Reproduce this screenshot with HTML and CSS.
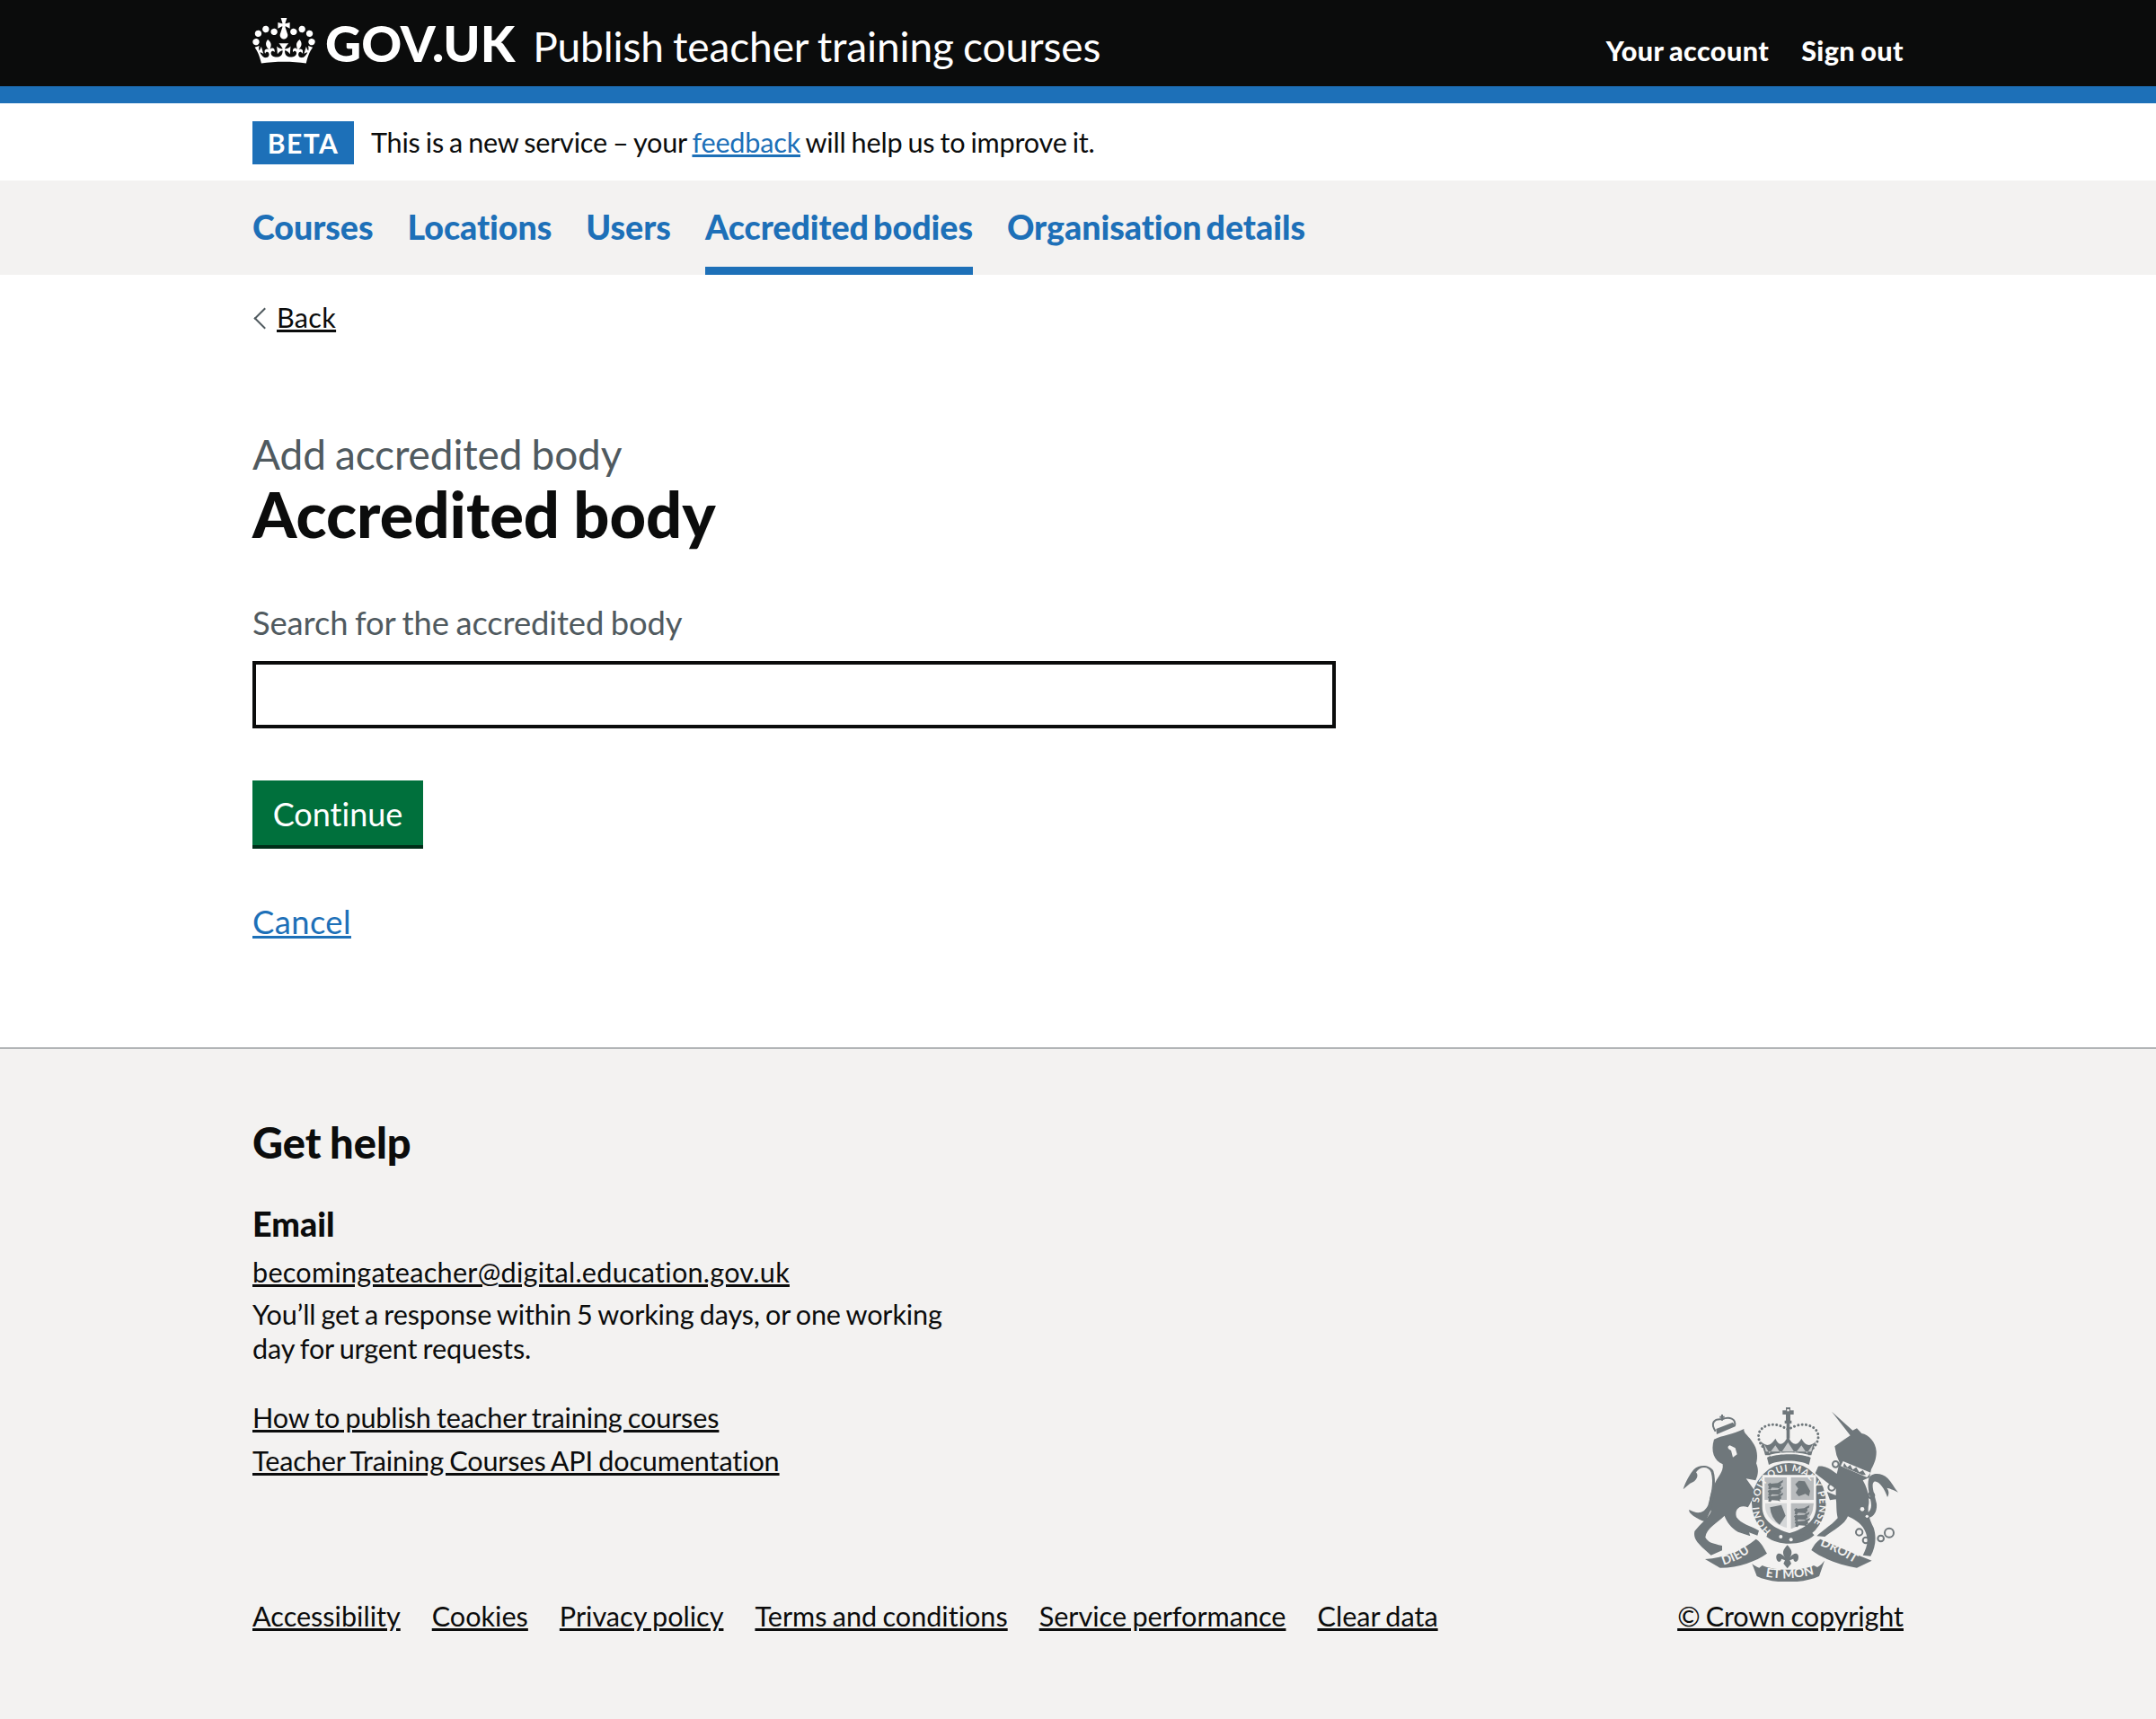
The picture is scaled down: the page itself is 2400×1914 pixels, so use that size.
FILE: index.html
```html
<!DOCTYPE html>
<html lang="en">
<head>
<meta charset="utf-8">
<title>Accredited body - Publish teacher training courses</title>
<link rel="stylesheet" href="styles.css">
</head>
<body>
<header class="header">
  <div class="container header-inner">
    <div class="brand">
      <svg class="crown" viewBox="0 0 132 97" aria-hidden="true"><path fill="currentColor" fill-rule="evenodd" d="M25 30.2c3.5 1.5 7.7-.2 9.1-3.7 1.5-3.6-.2-7.8-3.9-9.2-3.6-1.4-7.6.3-9.1 3.9-1.4 3.5.3 7.5 3.9 9zM9 39.5c3.6 1.5 7.8-.2 9.2-3.7 1.5-3.6-.2-7.8-3.9-9-3.6-1.5-7.6.2-9.1 3.8-1.4 3.5.3 7.5 3.8 8.9zM4.4 57.2c3.5 1.5 7.7-.2 9.1-3.8 1.5-3.6-.2-7.7-3.9-9.1-3.5-1.5-7.6.3-9.1 3.9-1.4 3.5.3 7.6 3.9 9zm38.3-21.4c3.5 1.5 7.7-.2 9.1-3.8 1.5-3.6-.2-7.7-3.9-9.1-3.6-1.5-7.6.3-9.1 3.9-1.3 3.6.4 7.7 3.9 9zm64.4-5.6c-3.6 1.5-7.8-.2-9.1-3.7-1.5-3.6.2-7.8 3.8-9.2 3.6-1.4 7.7.3 9.2 3.9 1.3 3.5-.4 7.5-3.9 9zm15.9 9.3c-3.6 1.5-7.7-.2-9.1-3.7-1.5-3.6.2-7.8 3.7-9.2 3.6-1.4 7.7.3 9.2 3.9 1.5 3.5-.3 7.5-3.8 9zm4.7 17.7c-3.6 1.5-7.8-.2-9.2-3.8-1.5-3.6.2-7.7 3.9-9.1 3.6-1.5 7.7.3 9.2 3.9 1.3 3.5-.4 7.6-3.9 9zM89.3 35.8c-3.6 1.5-7.8-.2-9.2-3.8-1.4-3.6.2-7.7 3.9-9.1 3.6-1.5 7.7.3 9.2 3.9 1.4 3.6-.3 7.7-3.9 9zM69.7 17.7l8.9 4.7V9.3l-8.9 2.8c-.2-.3-.5-.6-.9-.9L72.4 0H59.6l3.5 11.2c-.3.3-.6.5-.9.9l-8.8-2.8v13.1l8.8-4.7c.3.3.6.7.9.9l-5 15.4v.1c-.2.8-.4 1.6-.4 2.4 0 4.1 3.1 7.5 7 8.1h.2c.3 0 .7.1 1 .1.4 0 .7 0 1-.1h.2c4-.6 7.1-4.1 7.1-8.1 0-.8-.1-1.7-.4-2.4V34l-5.1-15.4c.4-.2.7-.6 1-.9zM66 92.8c16.9 0 32.8 1.1 47.1 3.2 4-16.9 8.9-26.7 14-33.5l-9.6-3.4c1 4.9 1.1 7.2 0 10.2-1.5-1.4-3-4.3-4.2-8.7L108.6 76c2.8-2 5-3.2 7.5-3.3-4.4 9.4-10 11.9-13.6 11.2-4.3-.8-6.3-4.6-5.6-7.9 1-4.7 5.7-5.9 8-.5 4.3-8.7-3-11.4-7.6-8.8 7.1-7.2 7.9-13.5 2.1-21.1-8 6.1-8.1 12.3-4.5 20.8-4.7-5.4-12.1-2.5-9.5 6.2 3.4-5.2 7.9-2 7.2 3.1-.6 4.3-6.4 7.8-13.5 7.2-10.3-.9-10.9-8-11.2-13.8 2.5-.5 7.1 1.8 11 7.3L80.2 60c-4.1 4.4-8 5.3-12.3 5.4 1.4-4.4 8-11.6 8-11.6H55.5s6.4 7.2 7.9 11.6c-4.2-.1-8-1-12.3-5.4l1.4 16.4c3.9-5.5 8.5-7.7 10.9-7.3-.3 5.8-.9 12.8-11.1 13.8-7.2.6-12.9-2.9-13.5-7.2-.7-5 3.8-8.3 7.1-3.1 2.7-8.7-4.6-11.6-9.4-6.2 3.7-8.5 3.6-14.7-4.6-20.8-5.8 7.6-5 13.9 2.2 21.1-4.7-2.6-11.9.1-7.7 8.8 2.3-5.5 7.1-4.2 8.1.5.7 3.3-1.3 7.1-5.7 7.9-3.5.7-9-1.8-13.5-11.2 2.5.1 4.7 1.3 7.5 3.3l-4.7-15.4c-1.2 4.4-2.7 7.2-4.3 8.7-1.1-3-.9-5.3 0-10.2l-9.5 3.4c5 6.9 9.9 16.7 14 33.5 14.8-2.1 30.8-3.2 47.7-3.2z"/></svg>
      <span class="logotype">GOV.UK</span>
      <span class="service-name">Publish teacher training courses</span>
    </div>
    <nav class="account-nav">
      <a href="#">Your account</a>
      <a href="#">Sign out</a>
    </nav>
  </div>
</header>

<div class="container phase-banner">
  <strong class="tag">BETA</strong>
  <span>This is a new service – your <a class="link" href="#">feedback</a> will help us to improve it.</span>
</div>

<nav class="primary-nav">
  <ul class="container primary-list">
    <li><a href="#">Courses</a></li>
    <li><a href="#">Locations</a></li>
    <li><a href="#">Users</a></li>
    <li class="current"><a href="#">Accredited bodies</a></li>
    <li><a href="#">Organisation details</a></li>
  </ul>
</nav>

<div class="container">
  <a class="back" href="#">Back</a>
  <main class="main">
    <span class="caption">Add accredited body</span>
    <h1 class="title">Accredited body</h1>
    <label class="label" for="q">Search for the accredited body</label>
    <input class="input" id="q" type="text">
    <button class="button" type="button">Continue</button>
    <p class="cancel"><a class="link" href="#">Cancel</a></p>
  </main>
</div>

<footer class="footer">
  <div class="container">
    <h2 class="help-title">Get help</h2>
    <h3 class="help-sub">Email</h3>
    <p class="help-mail"><a href="#">becomingateacher@digital.education.gov.uk</a></p>
    <p class="help-note">You’ll get a response within 5 working days, or one working day for urgent requests.</p>
    <ul class="help-links">
      <li><a href="#">How to publish teacher training courses</a></li>
      <li><a href="#">Teacher Training Courses API documentation</a></li>
    </ul>
    <div class="footer-bottom">
      <ul class="meta-links">
        <li><a href="#">Accessibility</a></li>
        <li><a href="#">Cookies</a></li>
        <li><a href="#">Privacy policy</a></li>
        <li><a href="#">Terms and conditions</a></li>
        <li><a href="#">Service performance</a></li>
        <li><a href="#">Clear data</a></li>
      </ul>
      <div class="licence">
        <svg class="crest" viewBox="100 75 720 585" aria-hidden="true">
          <defs>
            <path id="garter" d="M396,490 A101,110 0 1 1 516,490"/>
            <path id="rib-l" d="M232,606 Q290,590 336,552"/>
            <path id="rib-r" d="M556,538 Q615,560 684,604"/>
            <path id="rib-c" d="M372,642 Q450,658 536,636"/>
            <path id="small-lion" d="M0,0 l8,-6 l4,3 l22,-2 l10,-6 l8,-4 l-2,8 l-6,3 l2,8 l-6,4 l2,6 l-8,-3 l-20,-1 l-4,6 l-8,-2 l2,-8 z"/>
          </defs>
          <g class="crest-dark">
            <!-- lion -->
            <path d="M205,185 C230,172 270,168 305,150 C302,165 324,175 334,195 C350,215 352,245 346,265 C354,285 354,300 344,322 L312,316 L345,362 L362,392 L335,385 C325,395 325,405 318,412 C292,402 272,418 280,445 C295,468 325,472 355,490 L350,506 L322,496 L326,508 L285,494 C262,480 248,462 240,440 C215,465 180,480 176,512 C186,530 200,532 232,540 L232,556 L195,572 L165,545 C150,530 135,515 140,492 C160,465 185,450 195,425 C185,400 190,370 205,340 C215,310 238,295 234,268 C205,255 193,225 205,185 Z"/>
            <path d="M176,460 C150,452 118,432 122,420 C150,436 172,432 185,405 C195,370 205,330 195,295 C188,275 160,272 145,295 C155,305 148,325 125,332 L102,352 C110,325 125,300 138,285 C155,268 190,268 203,290 C214,325 205,375 195,420 Z"/>
            <!-- unicorn -->
            <path d="M598,92 L668,155 L682,148 L698,165 C722,168 745,195 747,225 C748,250 738,270 730,285 L724,312 L702,322 C716,345 724,375 722,400 C718,420 718,440 738,480 C748,510 745,545 728,575 L702,572 C716,545 724,520 708,488 C694,462 672,452 652,442 C642,470 600,490 575,510 L548,508 C565,490 600,470 618,448 C612,420 615,398 612,385 L592,388 L582,360 L612,372 L612,350 C590,335 570,320 543,298 L553,275 C575,272 595,285 615,300 L624,262 L614,238 L608,208 L640,185 L660,172 Z"/>
            <path d="M722,315 C730,295 765,295 785,315 C800,330 805,345 820,362 C800,352 790,348 782,347 C790,357 790,368 784,378 C775,350 755,322 740,326 C727,335 742,370 748,400 C750,422 742,442 722,447 L716,432 C732,420 732,405 727,385 C722,360 716,337 722,315 Z"/>
            <!-- garter -->
            <ellipse cx="455" cy="396" rx="124" ry="132"/>
            <path d="M388,490 C420,515 490,515 526,490 L540,505 C500,542 420,542 380,510 Z"/>
            <!-- royal crown -->
            <rect x="445" y="78" width="15" height="46"/>
            <rect x="434" y="88" width="37" height="14"/>
            <path d="M441,122 h23 v10 h-6 v50 h-11 v-50 h-6 z"/>
            <path d="M376,238 C372,222 368,212 362,192 C378,208 392,210 410,182 C420,205 435,210 452,175 C468,210 485,205 497,182 C512,210 528,208 545,192 C538,212 534,222 530,238 Z"/>
            <path d="M382,246 C415,226 490,226 528,246 L522,270 C490,252 420,252 388,270 Z"/>
            <!-- ribbons -->
            <path d="M175,585 C240,580 300,555 345,518 C365,530 372,550 382,566 C345,592 290,614 225,614 Z"/>
            <path d="M332,600 C338,606 346,610 356,614 L366,606 C400,624 500,626 538,606 L550,612 C560,606 566,600 574,590 L556,642 C500,668 400,668 348,642 Z"/>
            <path d="M530,555 C540,535 550,525 560,518 C610,540 670,565 732,590 L682,614 C630,606 570,585 530,555 Z"/>
            <!-- fleur de lis -->
            <path d="M450,538 C466,555 468,565 458,580 C472,560 492,562 486,586 C480,600 470,592 470,584 L458,589 L463,600 L450,616 L437,600 L442,589 L430,584 C430,592 420,600 414,586 C408,562 428,560 442,580 C432,565 434,555 450,538 Z"/>
            <!-- lion crown fill -->
            <path d="M212,150 L268,128 L276,142 L214,168 Z"/>
          </g>
          <g class="crest-line">
            <path d="M210,158 C192,130 205,115 232,118 C255,108 280,115 274,140"/>
            <path d="M232,102 V122 M224,110 H240"/>
            <circle cx="611" cy="268" r="10"/>
            <circle cx="598" cy="345" r="11"/>
            <circle cx="730" cy="372" r="10"/>
            <circle cx="690" cy="495" r="11"/>
            <circle cx="712" cy="522" r="10"/>
            <circle cx="762" cy="516" r="10"/>
            <circle cx="790" cy="497" r="15"/>
            <path class="beads" d="M376,218 C345,190 345,150 385,138 C410,130 435,142 452,152 C470,142 495,130 520,138 C562,150 562,190 532,218"/>
          </g>
          <g class="crest-shield">
            <path d="M366,304 L546,304 L546,410 C546,455 510,482 457,498 C404,482 366,455 366,410 Z"/>
            <path class="shield-q" d="M374,312 L448,312 L448,387 L374,387 Z"/>
            <path class="shield-q" d="M462,312 L538,312 L538,387 L462,387 Z"/>
            <path class="shield-h" d="M376,398 L448,398 L448,480 C415,470 378,450 376,410 Z"/>
            <path class="shield-q" d="M462,398 L538,398 L536,412 C534,450 498,472 462,484 Z"/>
            <circle cx="428" cy="510" r="6"/>
            <circle cx="462" cy="520" r="6"/>
            <path d="M258,205 C248,208 250,218 262,222 L268,245 L282,235 L276,214 Z"/>
            <path d="M636,258 L728,296 L716,312 L628,274 Z"/>
            <circle cx="700" cy="418" r="7"/>
            <circle cx="716" cy="442" r="5"/>
            <path d="M392,236 C420,226 490,226 520,236 L518,242 C490,232 420,232 394,242 Z"/>
            <path d="M372,200 L390,232 L410,205 L428,232 L452,195 L476,232 L497,205 L515,232 L536,200 L530,226 L378,226 Z" class="crown-hatch"/>
            <rect x="449" y="84" width="7" height="7"/>
          </g>
          <g class="crest-dark">
            <path d="M640,264 L650,278 L660,270 L668,286 L680,278 L690,295 L702,288 L712,304 L700,304 L636,276 Z"/>
            <use href="#small-lion" x="384" y="336"/>
            <use href="#small-lion" x="384" y="358"/>
            <use href="#small-lion" x="384" y="378"/>
            <use href="#small-lion" x="472" y="420"/>
            <use href="#small-lion" x="472" y="442"/>
            <use href="#small-lion" x="474" y="462"/>
            <path d="M476,335 l12,-12 l20,2 l8,14 l10,18 l-4,18 l-12,-8 l-22,8 l-10,-12 l8,-14 z"/>
            <path d="M392,412 L430,404 L444,440 L424,470 Q395,450 392,412 Z M403,417 L418,466 M414,412 L428,455 M400,432 L408,455"/>
          </g>
          <g class="crest-text">
            <text class="motto"><textPath href="#garter" textLength="500" lengthAdjust="spacing">HONI SOIT QUI MAL Y PENSE</textPath></text>
            <text><textPath href="#rib-l" startOffset="4%">DIEU</textPath></text>
            <text><textPath href="#rib-r" startOffset="2%">DROIT</textPath></text>
            <text><textPath href="#rib-c" startOffset="3%">ET MON</textPath></text>
          </g>
        </svg>
        <a href="#">© Crown copyright</a>
      </div>
    </div>
  </div>
</footer>
</body>
</html>
```

FILE: styles.css
```css
* { box-sizing: border-box; }
html, body { margin: 0; padding: 0; }
body {
  font-family: Lato, "Noto Sans", sans-serif;
  font-variant-ligatures: none;
  letter-spacing: -0.004em;
  word-spacing: -0.05em;
  color: #0b0c0c;
  background: #fff;
  font-size: 30.6px;
}
a { color: inherit; }
ul { list-style: none; margin: 0; padding: 0; }
.container { width: 1838px; margin: 0 auto; }

/* header */
.header { background: #0b0c0c; color: #fff; height: 115px; border-bottom: 19px solid #1d70b8; }
.header-inner { display: flex; justify-content: space-between; height: 96px; }
.brand { display: flex; align-items: flex-start; }
.crown { width: 70px; height: 51px; margin-top: 20px; color: #fff; flex: none; }
.logotype { font-size: 55.5px; font-weight: 900; line-height: 96px; margin-left: 11px; letter-spacing: 0; }
.service-name { font-size: 46px; line-height: 104px; margin-left: 20px; letter-spacing: -0.1px; }
.account-nav { display: flex; gap: 36px; font-size: 30.6px; font-weight: 900; line-height: 114px; letter-spacing: 0.4px; }
.account-nav a { text-decoration: none; color: #fff; }

/* phase banner */
.phase-banner { display: flex; align-items: center; height: 86px; gap: 19px; padding-top: 1px; font-size: 30.6px; letter-spacing: -0.2px; }
.tag { background: #1d70b8; color: #fff; width: 113px; height: 48px; text-align: center; line-height: 48px; font-size: 30px; letter-spacing: 1.5px; font-weight: 700; }
.link { color: #1d70b8; }

/* primary nav */
.primary-nav { background: #f3f2f1; }
.primary-list { display: flex; gap: 38px; height: 105px; }
.primary-list li { font-size: 37.6px; font-weight: 900; line-height: 104px; letter-spacing: -0.05px; word-spacing: -0.1em; }
.primary-list a { text-decoration: none; color: #1d70b8; display: block; height: 105px; }
.primary-list .current a { border-bottom: 9px solid #1d70b8; }

/* main */
.back { display: inline-block; margin-top: 30px; padding-left: 27px; font-size: 30.6px; line-height: 36px; letter-spacing: 0.3px; position: relative; }
.back::before {
  content: ""; position: absolute; left: 5px; top: 10px; width: 15px; height: 15px;
  border-left: 2px solid #505a5f; border-bottom: 2px solid #505a5f; transform: rotate(45deg);
}
.main { padding-top: 106px; padding-bottom: 117px; }
.caption { display: block; color: #505a5f; font-size: 46px; line-height: 56px; }
.title { margin: 0; font-size: 70.4px; line-height: 76px; font-weight: 900; letter-spacing: 0; }
.label { display: block; color: #505a5f; font-size: 36.4px; line-height: 46px; margin-top: 60px; }
.input { display: block; width: 1206px; height: 75px; border: 4px solid #0b0c0c; margin-top: 20px; background: #fff; border-radius: 0; }
.button { display: block; width: 190px; height: 76px; margin-top: 58px; background: #00703c; color: #fff; border: 0; border-bottom: 4px solid #002d18; font: inherit; font-size: 36px; padding: 2px 0 0; border-radius: 0; }
.cancel { margin: 58px 0 0; font-size: 36.4px; line-height: 46px; letter-spacing: 0.4px; }

/* footer */
.footer { background: #f3f2f1; border-top: 2px solid #b1b4b6; height: 750px; padding-top: 76px; }
.help-title { margin: 0; font-size: 47px; line-height: 56px; font-weight: 900; letter-spacing: 0; }
.help-sub { margin: 40px 0 0; font-size: 37.6px; line-height: 46px; font-weight: 900; letter-spacing: 0; }
.help-mail { margin: 11px 0 0; font-size: 30.6px; line-height: 40px; letter-spacing: 0.25px; }
.help-note { margin: 8px 0 0; width: 790px; font-size: 30.6px; line-height: 38px; }
.help-links { margin-top: 34px; font-size: 30.6px; line-height: 48px; }
.footer-bottom { display: flex; justify-content: space-between; align-items: flex-end; margin-top: -85px; }
.meta-links { display: flex; gap: 35px; font-size: 30.6px; line-height: 38px; letter-spacing: 0; }
.licence { display: flex; flex-direction: column; align-items: center; font-size: 30.6px; line-height: 38px; gap: 20px; letter-spacing: -0.1px; }
.crest { width: 240px; height: 195px; display: block; }
.crest-dark { fill: #6f777b; }
.crest-line { fill: none; stroke: #6f777b; stroke-width: 6; }
.beads { stroke-width: 9; stroke-linecap: round; stroke-dasharray: 0.1 13; }
.crest-shield { fill: #f3f2f1; }
.shield-q { fill: #b9bcbe; }
.shield-h { fill: #d5d7d8; }
.crown-hatch { fill: #c9cbcc; }
.crest-text { fill: #f3f2f1; font-size: 42px; font-weight: 700; font-family: Lato, sans-serif; letter-spacing: 0; word-spacing: 0; }
.motto { font-size: 32px; }
```
